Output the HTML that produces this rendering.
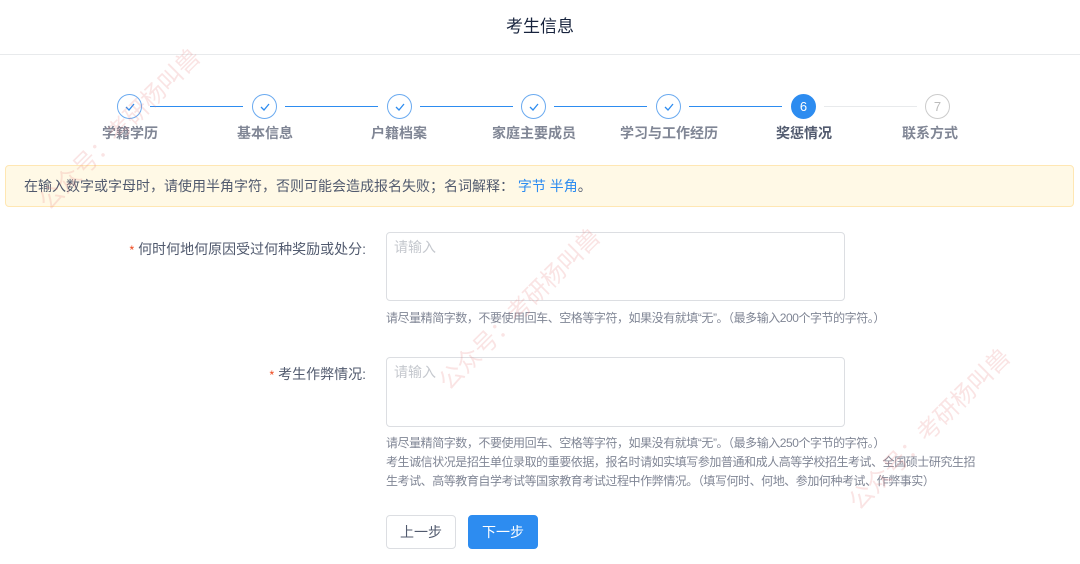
<!DOCTYPE html>
<html><head><meta charset="utf-8"><style>
*{margin:0;padding:0;box-sizing:border-box}
body{width:1080px;height:564px;background:#fff;font-family:"Liberation Sans","Noto Sans CJK SC",sans-serif;position:relative;overflow:hidden;color:#515a6e}
.hd{position:absolute;left:0;top:0;width:1080px;height:55px;border-bottom:1px solid #e8eaec;text-align:center;line-height:54px;font-size:17px;color:#17233d}
.c{position:absolute;width:25px;height:25px;border-radius:50%;border:1px solid #6aaaf0;top:94px;text-align:center;line-height:23px;font-size:13px;color:#2d8cf0;background:#fff}
.c svg{position:absolute;left:7px;top:8px}
.c.a{background:#2d8cf0;color:#fff;border-color:#2d8cf0}
.c.n{border-color:#ccc;color:#bbb}
.ln{position:absolute;top:106px;height:1px;background:#2d8cf0}
.ln.g{background:#e8eaec}
.lb{position:absolute;top:123px;width:140px;margin-left:-70px;text-align:center;font-size:14px;font-weight:bold;color:#808695}
.lb.a{color:#515a6e}
.al{position:absolute;left:5px;top:165px;width:1069px;height:42px;background:#fff9e6;border:1px solid #ffe7b3;border-radius:4px;font-size:14px;line-height:40px;padding-left:18px;color:#515a6e}
.al span{color:#2d8cf0}
.fl{position:absolute;right:714px;font-size:14px;color:#515a6e}
.fl i{color:#ed4014;font-style:normal;margin-right:4px;font-size:12px}
.ta{position:absolute;left:386px;width:459px;border:1px solid #dcdee2;border-radius:4px;font-size:14px;color:#c5c8ce;padding:4px 7px}
.ht{position:absolute;left:386px;font-size:12px;color:#808695;line-height:19px;white-space:nowrap;letter-spacing:-0.45px}
.bt{position:absolute;top:515px;width:70px;height:34px;border-radius:4px;font-size:14px;text-align:center;line-height:32px}
.wm{position:absolute;color:rgba(230,120,120,.2);font-size:24px;transform:rotate(-45deg);white-space:nowrap;pointer-events:none}
</style></head><body>
<div class="hd">考生信息</div>
<div class="ln" style="left:150px;width:93px"></div>
<div class="ln" style="left:285px;width:93px"></div>
<div class="ln" style="left:420px;width:93px"></div>
<div class="ln" style="left:554px;width:93px"></div>
<div class="ln" style="left:689px;width:93px"></div>
<div class="ln g" style="left:824px;width:93px"></div>
<div class="c" style="left:117px"><svg width="10" height="8"><path d="M1 4l3 3 5-6" stroke="#2d8cf0" stroke-width="1.3" fill="none"/></svg></div>
<div class="c" style="left:252px"><svg width="10" height="8"><path d="M1 4l3 3 5-6" stroke="#2d8cf0" stroke-width="1.3" fill="none"/></svg></div>
<div class="c" style="left:387px"><svg width="10" height="8"><path d="M1 4l3 3 5-6" stroke="#2d8cf0" stroke-width="1.3" fill="none"/></svg></div>
<div class="c" style="left:521px"><svg width="10" height="8"><path d="M1 4l3 3 5-6" stroke="#2d8cf0" stroke-width="1.3" fill="none"/></svg></div>
<div class="c" style="left:656px"><svg width="10" height="8"><path d="M1 4l3 3 5-6" stroke="#2d8cf0" stroke-width="1.3" fill="none"/></svg></div>
<div class="c a" style="left:791px">6</div>
<div class="c n" style="left:925px">7</div>
<div class="lb" style="left:130px">学籍学历</div>
<div class="lb" style="left:265px">基本信息</div>
<div class="lb" style="left:399px">户籍档案</div>
<div class="lb" style="left:534px">家庭主要成员</div>
<div class="lb" style="left:669px">学习与工作经历</div>
<div class="lb a" style="left:804px">奖惩情况</div>
<div class="lb" style="left:930px">联系方式</div>
<div class="al">在输入数字或字母时，请使用半角字符，否则可能会造成报名失败；名词解释： <span>字节 半角</span>。</div>
<div class="fl" style="top:239px"><i>*</i>何时何地何原因受过何种奖励或处分:</div>
<div class="ta" style="top:232px;height:69px">请输入</div>
<div class="ht" style="top:309px">请尽量精简字数，不要使用回车、空格等字符，如果没有就填“无”。（最多输入200个字节的字符。）</div>
<div class="fl" style="top:364px"><i>*</i>考生作弊情况:</div>
<div class="ta" style="top:357px;height:70px">请输入</div>
<div class="ht" style="top:434px">请尽量精简字数，不要使用回车、空格等字符，如果没有就填“无”。（最多输入250个字节的字符。）<br>考生诚信状况是招生单位录取的重要依据，报名时请如实填写参加普通和成人高等学校招生考试、全国硕士研究生招<br>生考试、高等教育自学考试等国家教育考试过程中作弊情况。（填写何时、何地、参加何种考试、作弊事实）</div>
<div class="bt" style="left:386px;border:1px solid #dcdee2;color:#515a6e">上一步</div>
<div class="bt" style="left:468px;background:#2d8cf0;color:#fff;border:1px solid #2d8cf0">下一步</div>
<div class="wm" style="left:10px;top:110px">公众号：考研杨叫兽</div>
<div class="wm" style="left:410px;top:290px">公众号：考研杨叫兽</div>
<div class="wm" style="left:820px;top:410px">公众号：考研杨叫兽</div>
</body></html>
